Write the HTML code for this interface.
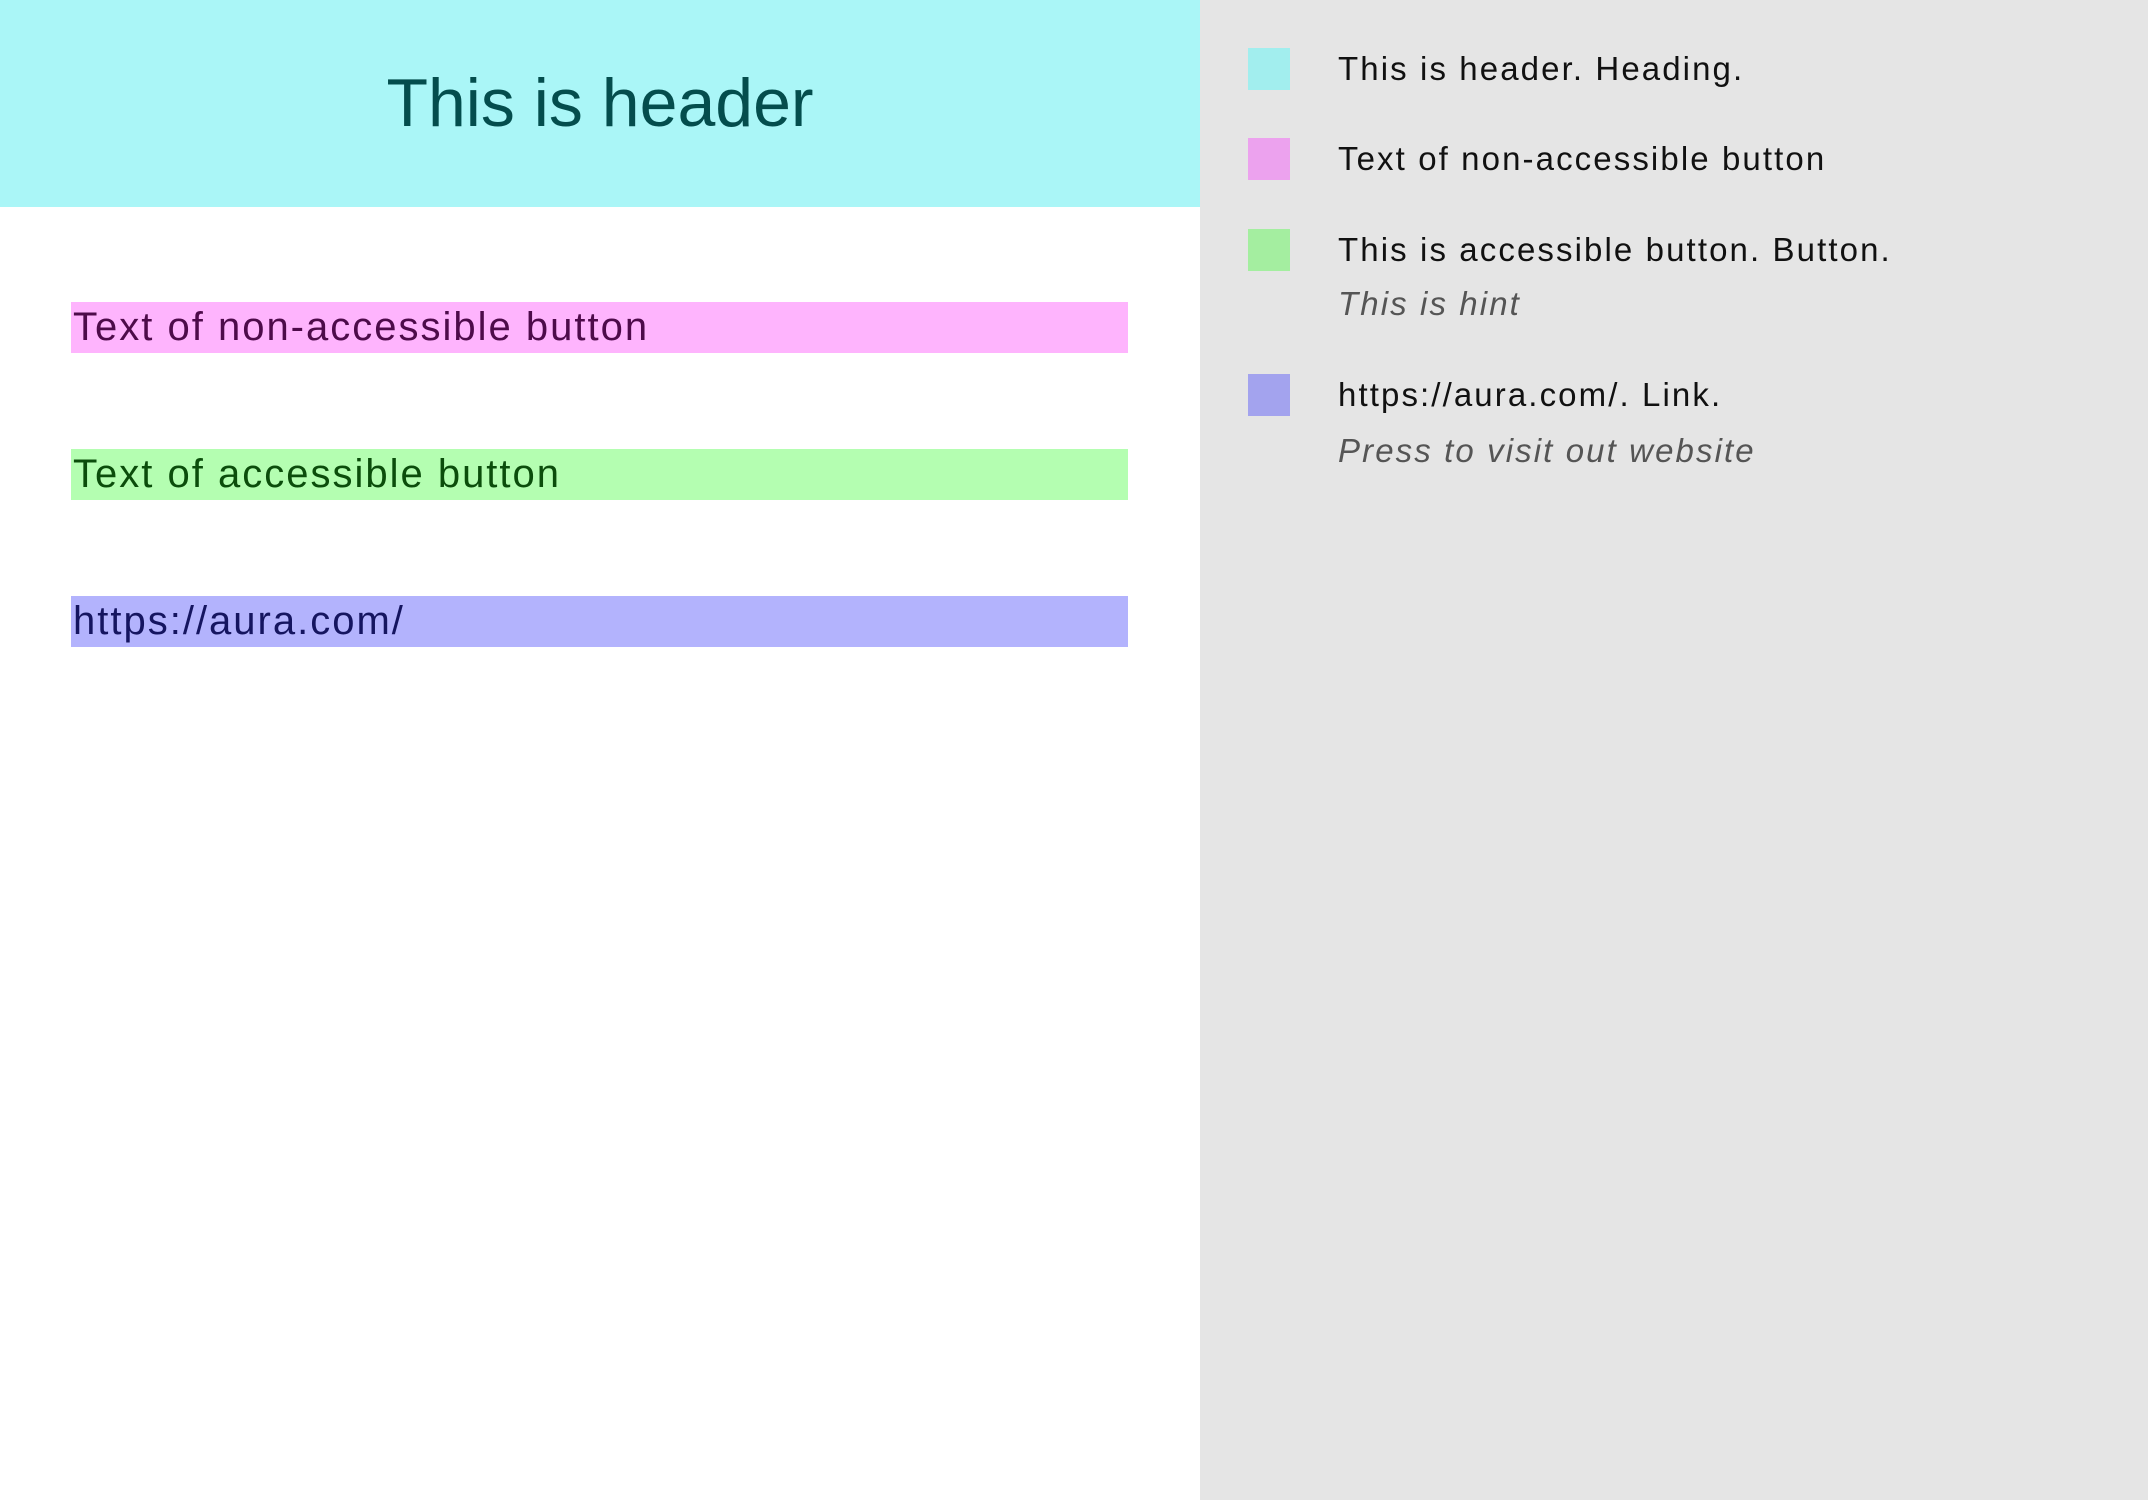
<!DOCTYPE html>
<html><head><meta charset="utf-8"><style>
html,body{margin:0;padding:0;width:2148px;height:1500px;overflow:hidden;font-family:"Liberation Sans",sans-serif;}
#left{position:absolute;left:0;top:0;width:1200px;height:1500px;background:#fff;}
#hdr{position:absolute;left:0;top:0;width:1200px;height:207px;background:#aaf6f7;color:#044d4d;font-size:68px;text-align:center;line-height:207px;}
.bar{position:absolute;left:71px;width:1057px;height:51px;font-size:40px;line-height:51px;letter-spacing:2px;padding-left:2px;box-sizing:border-box;}
#right{position:absolute;left:1200px;top:0;width:948px;height:1500px;background:#e5e5e5;}
.sq{position:absolute;left:48px;width:42px;height:42px;}
.t{position:absolute;left:138px;font-size:33px;color:#111;line-height:42px;white-space:nowrap;letter-spacing:2.1px;}
.h{position:absolute;left:138px;font-size:33px;color:#555;font-style:italic;white-space:nowrap;line-height:42px;letter-spacing:2.1px;}
</style></head><body>
<div id="left">
<div id="hdr">This is header</div>
<div class="bar" style="top:302px;background:#feb4fd;color:#4d0b4a">Text of non-accessible button</div>
<div class="bar" style="top:449px;background:#b4feb1;color:#0b4d0b">Text of accessible button</div>
<div class="bar" style="top:596px;background:#b3b3fd;color:#151560">https://aura.com/</div>
</div>
<div id="right">
<div class="sq" style="top:48px;background:#a2eeee"></div>
<div class="t" style="top:48px">This is header. Heading.</div>
<div class="sq" style="top:138px;background:#eca2ee"></div>
<div class="t" style="top:138px">Text of non-accessible button</div>
<div class="sq" style="top:229px;background:#a4eea0"></div>
<div class="t" style="top:229px">This is accessible button. Button.</div>
<div class="h" style="top:283px">This is hint</div>
<div class="sq" style="top:374px;background:#a3a3ee"></div>
<div class="t" style="top:374px">https://aura.com/. Link.</div>
<div class="h" style="top:430px">Press to visit out website</div>
</div>
</body></html>
